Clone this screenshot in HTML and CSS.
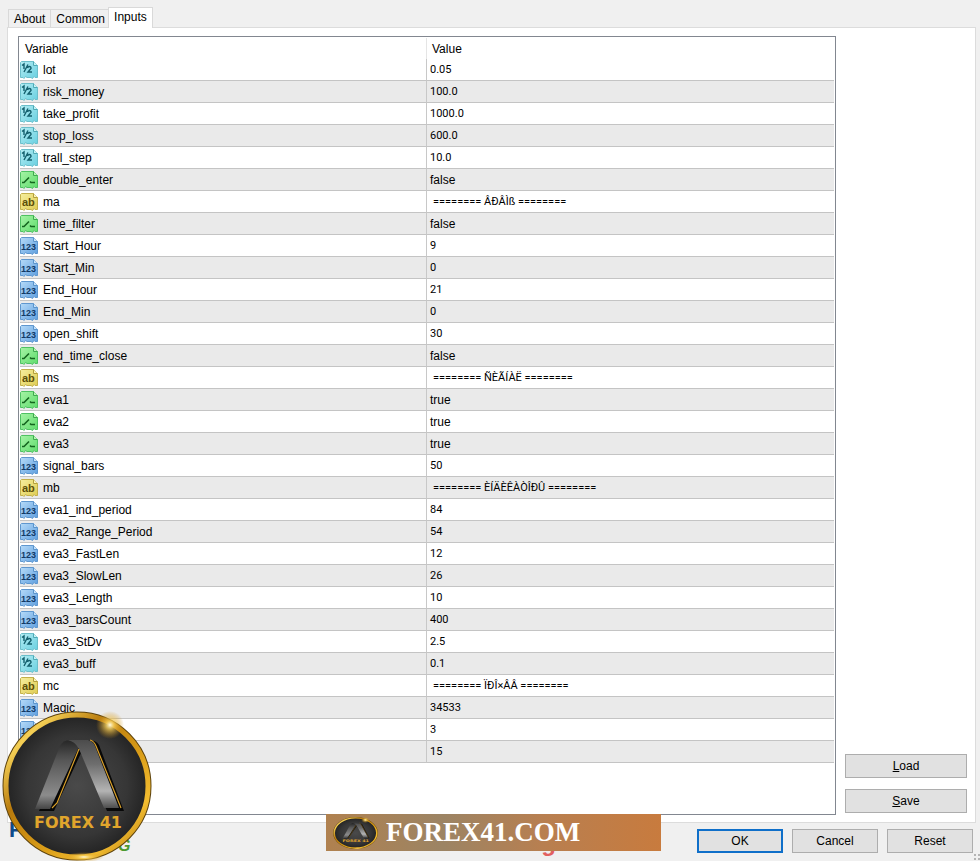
FILE: index.html
```
<!DOCTYPE html>
<html lang="en">
<head>
    <meta charset="UTF-8">
    <meta name="viewport" content="width=device-width, initial-scale=1.0">
    <title>Inputs</title>
    <link rel="stylesheet" href="styles.css">
</head>
<body>
    <svg class="sprite" aria-hidden="true">
        <defs>
            <linearGradient id="fill-double" x1="0" y1="0" x2="1" y2="1">
                <stop offset="0" stop-color="#b4edf3"/>
                <stop offset="1" stop-color="#68cfe0"/>
            </linearGradient>
            <linearGradient id="fill-bool" x1="0" y1="0" x2="1" y2="1">
                <stop offset="0" stop-color="#a5f3a5"/>
                <stop offset="1" stop-color="#5fdc6c"/>
            </linearGradient>
            <linearGradient id="fill-string" x1="0" y1="0" x2="1" y2="1">
                <stop offset="0" stop-color="#f6ee9e"/>
                <stop offset="1" stop-color="#dfcc52"/>
            </linearGradient>
            <linearGradient id="fill-int" x1="0" y1="0" x2="1" y2="1">
                <stop offset="0" stop-color="#b5daf8"/>
                <stop offset="1" stop-color="#5f9fdf"/>
            </linearGradient>
            <linearGradient id="gold" x1="0" y1="0" x2="1" y2="1">
                <stop offset="0" stop-color="#c98a10"/>
                <stop offset="0.15" stop-color="#f4cf55"/>
                <stop offset="0.35" stop-color="#b87a0c"/>
                <stop offset="0.6" stop-color="#d99c18"/>
                <stop offset="0.8" stop-color="#f3bd30"/>
                <stop offset="1" stop-color="#a66c08"/>
            </linearGradient>
            <radialGradient id="coal">
                <stop offset="0" stop-color="#4a4a4a"/>
                <stop offset="0.7" stop-color="#363636"/>
                <stop offset="1" stop-color="#222222"/>
            </radialGradient>
            <radialGradient id="spark">
                <stop offset="0" stop-color="#fffbe0"/>
                <stop offset="0.3" stop-color="#f7cf5a" stop-opacity="0.8"/>
                <stop offset="1" stop-color="#c98a10" stop-opacity="0"/>
            </radialGradient>
            <linearGradient id="steel" x1="0" y1="0" x2="0" y2="1">
                <stop offset="0" stop-color="#4c4c4c"/>
                <stop offset="0.35" stop-color="#6d6d6d"/>
                <stop offset="0.75" stop-color="#b4b4b4"/>
                <stop offset="1" stop-color="#4e4e4e"/>
            </linearGradient>
            <linearGradient id="steel-dark" x1="0" y1="0" x2="0" y2="1">
                <stop offset="0" stop-color="#262626"/>
                <stop offset="0.3" stop-color="#575757"/>
                <stop offset="0.8" stop-color="#8c8c8c"/>
                <stop offset="1" stop-color="#444444"/>
            </linearGradient>
            <path id="page" d="M1.5 .5H13.500L17.500 4.500V16.500H15L14 15.500L12.500 17.500L11 16.500H7L5.500 15.500L4 17.500L3 16.500H.5V1.500Z"/>
            <path id="fold" d="M13.500 .5V4.500H17.500"/>
        </defs>
        <symbol id="icon-double" viewBox="0 0 18 18">
            <use href="#page" fill="url(#fill-double)" stroke="#6bbfcb"/>
            <use href="#fold" fill="#c8f4f6" stroke="#4fa9b6"/>
            <path d="M2 4.500L4 3V8M4 11L8 3.500M7.500 7Q8 5.500 9.500 5.500T11 7.500L8 11H12" fill="none" stroke="#14606e" stroke-width="1.400"/>
        </symbol>
        <symbol id="icon-bool" viewBox="0 0 18 18">
            <use href="#page" fill="url(#fill-bool)" stroke="#4fc163"/>
            <use href="#fold" fill="#b9f7b4" stroke="#3fa850"/>
            <path d="M2 11.500H4L9 6.500M10 10.500L11 11.500H15" fill="none" stroke="#14651f" stroke-width="1.600"/>
        </symbol>
        <symbol id="icon-string" viewBox="0 0 18 18">
            <use href="#page" fill="url(#fill-string)" stroke="#c3b04a"/>
            <use href="#fold" fill="#fbf5bd" stroke="#b39f3c"/>
            <text x="2" y="13" class="glyph glyph-string">ab</text>
        </symbol>
        <symbol id="icon-int" viewBox="0 0 18 18">
            <use href="#page" fill="url(#fill-int)" stroke="#5f97cf"/>
            <use href="#fold" fill="#c9e4fb" stroke="#5a94cc"/>
            <text x="1" y="13" class="glyph glyph-int">123</text>
        </symbol>
        <symbol id="emblem" viewBox="0 0 150 150">
            <circle cx="75" cy="75" r="72" fill="url(#coal)" stroke="#5e430c" stroke-width="5"/>
            <circle cx="75" cy="75" r="71" fill="none" stroke="url(#gold)" stroke-width="5"/>
            <path d="M37 100H52L79 42L105 100H122L97 34Q94 29 86 29H66Z" fill="#080808"/>
            <path d="M58 35Q61 29 68 29H80L76 38L48 98H33Z" fill="url(#steel-dark)"/>
            <path d="M65 29H86Q91 30 93 35L117 97H102L77 38Q73 30 65 29Z" fill="url(#steel)"/>
            <path d="M50 97L55 92L77 38M88 29Q92 30 94 35L119 97" fill="none" stroke="#d9a02a" stroke-width="1.200"/>
            <circle cx="108" cy="14" r="14" fill="url(#spark)"/>
            <ellipse cx="82" cy="146" rx="20" ry="5" fill="url(#spark)"/>
            <text x="32" y="117" class="emblem-text">FOREX 41</text>
        </symbol>
    </svg>

    <div class="dialog">
        <div class="tabs" role="tablist">
            <button class="tab" role="tab">About</button>
            <button class="tab" role="tab">Common</button>
            <button class="tab active" role="tab" aria-selected="true">Inputs</button>
        </div>
        <div class="panel">
            <div class="list">
                <table class="inputs">
                    <thead>
                        <tr>
                            <th>Variable</th>
                            <th>Value</th>
                        </tr>
                    </thead>
                    <tbody></tbody>
                </table>
            </div>
            <div class="side">
                <button class="button"><u>L</u>oad</button>
                <button class="button"><u>S</u>ave</button>
            </div>
        </div>
        <div class="footer">
            <button class="button button-ok">OK</button>
            <button class="button">Cancel</button>
            <button class="button">Reset</button>
        </div>

        <span class="mark mark-blue">F</span>
        <span class="mark mark-green">G</span>
        <svg class="badge" role="img" aria-label="Forex 41"><use href="#emblem"/></svg>
        <span class="mark mark-red">forexunitrading.com</span>
        <div class="banner">
            <svg class="banner-logo" preserveAspectRatio="none" viewBox="0 0 150 150" aria-hidden="true"><use href="#emblem"/></svg>
            <span class="banner-text">FOREX41.COM</span>
        </div>
        <svg class="grip" viewBox="0 0 6 6" aria-hidden="true"><path d="M0 0h2v2H0zM4 0h2v2H4zM0 4h2v2H0zM4 4h2v2H4z" fill="#b4b4b4"/></svg>
    </div>

    <script>
        let inputs_data = [
            ["double", "lot", "0.05"],
            ["double", "risk_money", "100.0"],
            ["double", "take_profit", "1000.0"],
            ["double", "stop_loss", "600.0"],
            ["double", "trall_step", "10.0"],
            ["bool", "double_enter", "false"],
            ["string", "ma", "======== ÂÐÂÌß ========"],
            ["bool", "time_filter", "false"],
            ["int", "Start_Hour", "9"],
            ["int", "Start_Min", "0"],
            ["int", "End_Hour", "21"],
            ["int", "End_Min", "0"],
            ["int", "open_shift", "30"],
            ["bool", "end_time_close", "false"],
            ["string", "ms", "======== ÑÈÃÍÀË ========"],
            ["bool", "eva1", "true"],
            ["bool", "eva2", "true"],
            ["bool", "eva3", "true"],
            ["int", "signal_bars", "50"],
            ["string", "mb", "======== ÈÍÄÈÊÀÒÎÐÛ ========"],
            ["int", "eva1_ind_period", "84"],
            ["int", "eva2_Range_Period", "54"],
            ["int", "eva3_FastLen", "12"],
            ["int", "eva3_SlowLen", "26"],
            ["int", "eva3_Length", "10"],
            ["int", "eva3_barsCount", "400"],
            ["double", "eva3_StDv", "2.5"],
            ["double", "eva3_buff", "0.1"],
            ["string", "mc", "======== ÏÐÎ×ÂÂ ========"],
            ["int", "Magic", "34533"],
            ["int", "", "3"],
            ["int", "", "15"]
        ];

        let tbody = document.querySelector(".inputs tbody");

        inputs_data.forEach(([type, name, value]) => {
            let row = document.createElement("tr");
            row.innerHTML = `
                <td><span class="variable"><svg class="icon" aria-hidden="true"><use href="#icon-${type}"/></svg>${name}</span></td>
                <td class="value value-${type}">${value}</td>`;
            tbody.appendChild(row);
        });
    </script>
</body>
</html>
```
FILE: styles.css
```
* {
    box-sizing: border-box;
}
body {
    margin: 0;
    background-color: #f0f0f0;
    color: black;
    font-family: "Liberation Sans", Arial, sans-serif;
    font-size: 12px;
}
.sprite {
    position: absolute;
    width: 0;
    height: 0;
}
.dialog {
    position: relative;
    display: flex;
    flex-direction: column;
    min-height: 100vh;
    overflow: hidden;
}

/* tabs */
.tabs {
    display: flex;
    align-items: flex-end;
    padding: 7px 8px 0;
}
.tab {
    height: 18px;
    padding: 0 5px;
    border: 1px solid #d9d9d9;
    border-bottom: none;
    background-color: #f0f0f0;
    color: inherit;
    font: inherit;
}
.tab + .tab {
    border-left: none;
}
.tab.active {
    position: relative;
    height: 21px;
    margin: 0 0 -1px -3px;
    padding: 0 5px 2px;
    border-left: 1px solid #d9d9d9;
    background-color: white;
}

/* panel */
.panel {
    display: flex;
    flex: 1;
    gap: 9px;
    margin: 0 4px 0 7px;
    padding: 8px 8px 7px 10px;
    border: 1px solid #dcdcdc;
    background-color: white;
}
.list {
    flex: 1;
    padding: 1px;
    border: 1px solid #828790;
}
.inputs {
    width: 100%;
    table-layout: fixed;
    border-spacing: 0;
}
.inputs th {
    height: 21px;
    padding: 0 5px;
    font-weight: normal;
    text-align: left;
}
.inputs th:first-child {
    border-right: 1px solid #e5e5e5;
}
.inputs td {
    height: 22px;
    padding: 0 3px 0 0;
    border-bottom: 1px solid #c4c4c4;
}
.inputs td:first-child {
    border-right: 1px solid #c8c8c8;
}
.inputs tr:nth-child(even) td {
    background-color: #eaeaea;
}
.inputs .value {
    padding-left: 3px;
}
.inputs .value-double,
.inputs .value-int,
.inputs .value-string {
    font-family: Roboto, sans-serif;
    font-size: 11px;
}
.inputs .value-string {
    padding-left: 6px;
}
.variable {
    display: flex;
    align-items: center;
    gap: 5px;
}
.icon {
    width: 18px;
    height: 18px;
}
.glyph {
    font-family: "Liberation Sans", Arial, sans-serif;
}
.glyph-string {
    font-size: 11px;
    font-weight: bold;
    fill: #5c4f08;
}
.glyph-int {
    font-size: 9px;
    font-weight: bold;
    fill: #123a66;
}

/* buttons */
.side {
    display: flex;
    flex-direction: column;
    justify-content: flex-end;
    gap: 11px;
    width: 122px;
    padding-bottom: 2px;
}
.button {
    height: 24px;
    padding: 0;
    border: 1px solid #adadad;
    background-color: #e1e1e1;
    color: inherit;
    font: inherit;
}
.footer {
    display: flex;
    justify-content: flex-end;
    gap: 9px;
    padding: 6px 7px 8px;
}
.footer .button {
    width: 86px;
}
.footer .button-ok {
    border: 2px solid #0f6fc9;
}
.grip {
    position: absolute;
    right: 0;
    bottom: 1px;
    width: 6px;
    height: 6px;
}

/* logos over the dialog */
.mark {
    position: absolute;
    font-weight: bold;
}
.mark-blue {
    left: 9px;
    bottom: 19px;
    color: #0f4a8a;
    font-size: 22px;
    line-height: 24px;
}
.mark-green {
    left: 118px;
    bottom: 6px;
    color: #4c9a2f;
    font-size: 16px;
    font-style: italic;
    line-height: 18px;
}
.mark-red {
    left: 380px;
    bottom: 4px;
    color: #e26060;
    font-size: 24px;
    line-height: 28px;
}
.badge {
    position: absolute;
    left: 2px;
    bottom: 0;
    width: 150px;
    height: 150px;
}
.emblem-text {
    fill: #e0a52c;
    font-family: "DejaVu Sans", sans-serif;
    font-size: 16px;
    font-weight: bold;
}
.banner {
    position: absolute;
    left: 326px;
    bottom: 10px;
    display: flex;
    align-items: center;
    gap: 8px;
    width: 335px;
    height: 37px;
    padding-left: 7px;
    background: linear-gradient(to right, #b0814f, #9c8464 35%, #b87f50 65%, #c87b3e);
}
.banner-logo {
    width: 45px;
    height: 32px;
}
.banner-text {
    color: white;
    font-family: "Liberation Serif", serif;
    font-size: 27px;
    font-weight: bold;
}
```
